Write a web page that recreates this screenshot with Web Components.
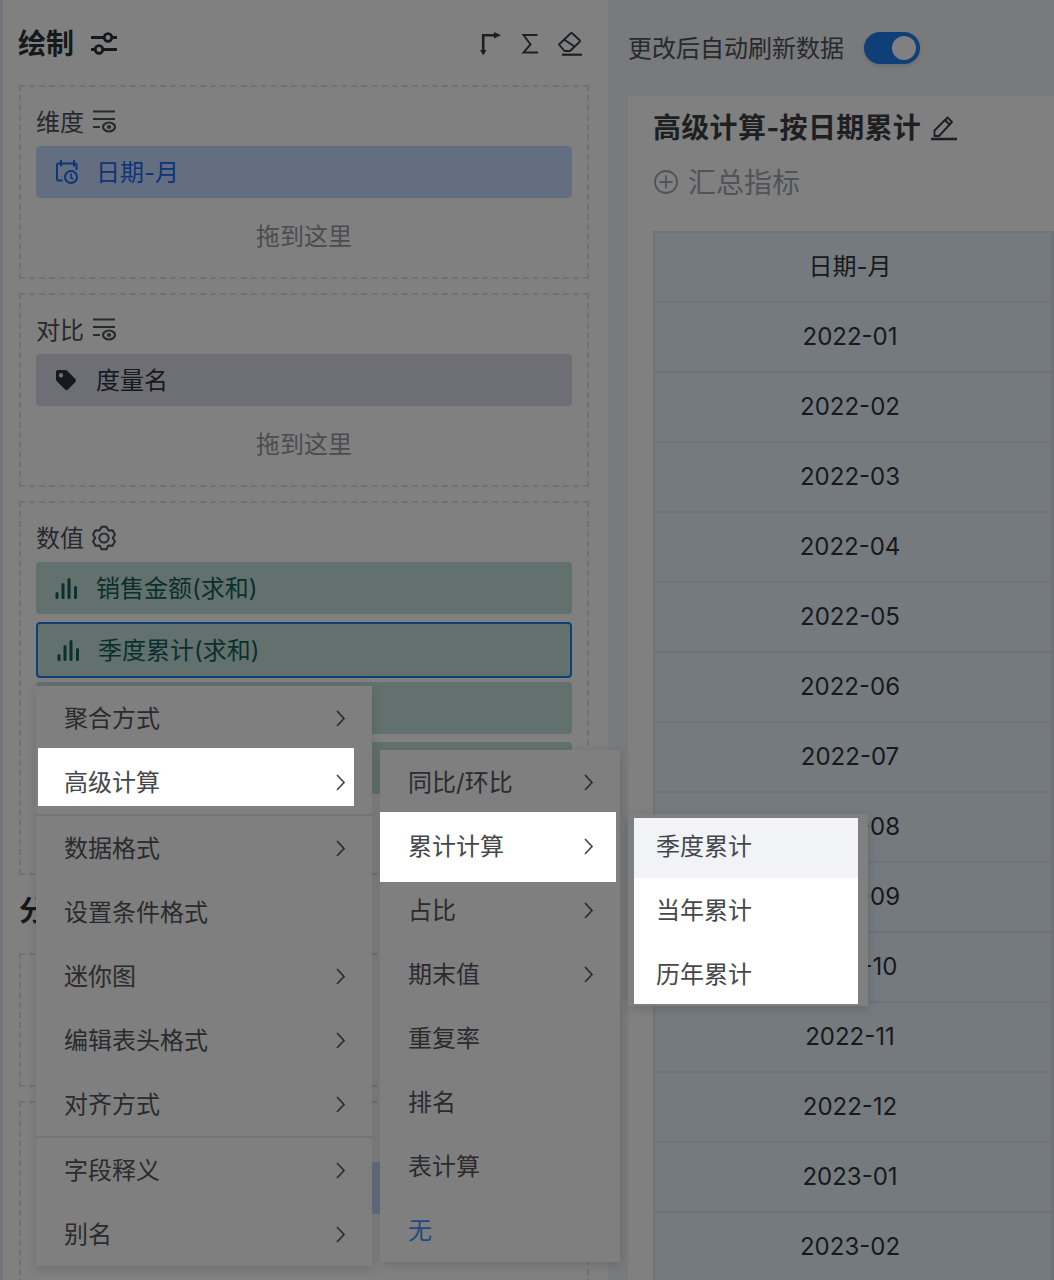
<!DOCTYPE html>
<html lang="zh">
<head>
<meta charset="utf-8">
<title>绘制</title>
<style>
  html, body { margin: 0; height: 1280px; overflow: hidden; background: #787a7c; }
  body { font-family: Inter, "Noto Sans CJK SC", sans-serif; line-height: 1.2; color: #26282b; }
</style>
</head>
<body>
<x-workspace>
  <x-draw-panel slot="left">
    <x-zone label="维度" icon="filter">
      <x-chip kind="date" icon="calendar">日期-月</x-chip>
    </x-zone>
    <x-zone label="对比" icon="filter">
      <x-chip kind="tag" icon="tag">度量名</x-chip>
    </x-zone>
    <x-zone label="数值" icon="gear">
      <x-chip kind="num" icon="bars">销售金额(求和)</x-chip>
      <x-chip kind="num" icon="bars" selected>季度累计(求和)</x-chip>
      <x-chip kind="num"></x-chip>
      <x-chip kind="num"></x-chip>
    </x-zone>
    <x-heading>分</x-heading>
    <x-zone short></x-zone>
    <x-zone>
      <x-chip kind="date"></x-chip>
    </x-zone>
  </x-draw-panel>
  <x-report slot="right"></x-report>
</x-workspace>

<x-menu style="left:36px;top:686px;width:336px">
  <x-menu-item arrow>聚合方式</x-menu-item>
  <x-menu-item arrow lit="a">高级计算</x-menu-item>
  <x-menu-sep></x-menu-sep>
  <x-menu-item arrow>数据格式</x-menu-item>
  <x-menu-item>设置条件格式</x-menu-item>
  <x-menu-item arrow>迷你图</x-menu-item>
  <x-menu-item arrow>编辑表头格式</x-menu-item>
  <x-menu-item arrow>对齐方式</x-menu-item>
  <x-menu-sep></x-menu-sep>
  <x-menu-item arrow>字段释义</x-menu-item>
  <x-menu-item arrow>别名</x-menu-item>
</x-menu>

<x-menu style="left:380px;top:750px;width:240px">
  <x-menu-item arrow>同比/环比</x-menu-item>
  <x-menu-item arrow lit="b">累计计算</x-menu-item>
  <x-menu-item arrow>占比</x-menu-item>
  <x-menu-item arrow>期末值</x-menu-item>
  <x-menu-item>重复率</x-menu-item>
  <x-menu-item>排名</x-menu-item>
  <x-menu-item>表计算</x-menu-item>
  <x-menu-item blue>无</x-menu-item>
</x-menu>

<x-menu style="left:628px;top:814px;width:240px">
  <x-menu-item lit="c">季度累计</x-menu-item>
  <x-menu-item lit="d">当年累计</x-menu-item>
  <x-menu-item lit="e">历年累计</x-menu-item>
</x-menu>

<script>
const ICONS = {
  sliders: '<g fill="none" stroke="currentColor" stroke-width="2.8"><path d="M0 5.500h13M21 5.500h5M0 17.500h4M12 17.500h14"/><circle cx="17" cy="5.500" r="3.800"/><circle cx="8" cy="17.500" r="3.800"/></g>',
  corner: '<path d="M3.200 20V3.200H15" fill="none" stroke="currentColor" stroke-width="2.600"/><path d="M0 18h6.500l-3.200 5.500zM14 0l7 3.200-7 3.300z" fill="currentColor"/>',
  sigma: '<path d="M15.500 3H1.500l7 9.500-7 8h14.500" fill="none" stroke="currentColor" stroke-width="1.900"/>',
  eraser: '<g fill="none" stroke="currentColor" stroke-width="1.900" stroke-linejoin="round"><path d="M1 12.500 12.500 1.500a1.500 1.500 0 0 1 2 0l7 6.500a1.500 1.500 0 0 1 0 2L12 19H6.500z"/><path d="m6 7.500 10.500 7"/><path d="M4 22.700h20" stroke-width="2.200"/></g>',
  filter: '<g fill="none" stroke="currentColor" stroke-width="2.200"><path d="M0 1.500h22M0 9h22M0 17h7"/><ellipse cx="16" cy="17" rx="6" ry="4.500"/></g><circle cx="16" cy="17" r="2.100" fill="currentColor"/>',
  calendar: '<g fill="none" stroke="currentColor" stroke-width="2"><path d="M7.500 20.500H3.500a1.500 1.500 0 0 1-1.500-1.500V5a1.500 1.500 0 0 1 1.500-1.500H20a1.500 1.500 0 0 1 1.500 1.500v5M6 0v6.500M19 0v6.500"/><circle cx="16" cy="17" r="6"/><path d="M16 13.500v4l2.200 1.500" stroke-width="1.600"/></g>',
  tag: '<path d="M1 3a2 2 0 0 1 2-2h7.500a2 2 0 0 1 1.400.6l8.500 8.500a2 2 0 0 1 0 2.800l-7.500 7.500a2 2 0 0 1-2.800 0L1.600 11.900A2 2 0 0 1 1 10.500zM6 4a2.200 2.200 0 1 0 0 4.400A2.200 2.200 0 0 0 6 4z" fill="currentColor" fill-rule="evenodd"/>',
  gear: '<g fill="none" stroke="currentColor" stroke-width="2" stroke-linejoin="round"><path d="M9.600 .8h4.800l2 3.600 4.150-.1 2.400 4.150L20.800 12l2.150 3.550-2.400 4.150-4.150-.1-2 3.650H9.600l-2-3.650-4.150.1-2.400-4.150L3.200 12 1.050 8.450l2.400-4.150 4.150.1z"/><circle cx="12" cy="12" r="4.600"/></g>',
  bars: '<path d="M2 19.500v-4M8 19.500v-13M14 19.500v-18M20.500 19.500v-10" fill="none" stroke="currentColor" stroke-width="3" stroke-linecap="round"/>',
  pencil: '<g fill="none" stroke="currentColor" stroke-width="1.900" stroke-linejoin="round"><path d="M3.500 20v-5.500L16.500 1.500l4.500 4.500L8 20z"/><path d="m14 4 4.500 4.500"/><path d="M0 23h26" stroke-width="2.600"/></g>',
  plus: '<g fill="none" stroke="currentColor" stroke-width="1.800"><circle cx="12" cy="12" r="11"/><path d="M12 5.500v13M5.500 12h13"/></g>',
  chevron: '<path d="m1 1 7 7.500L1 16" fill="none" stroke="currentColor" stroke-width="1.700"/>'
};

class XIcon extends HTMLElement {
  connectedCallback() {
    const w = this.getAttribute("w") || 24;
    const h = this.getAttribute("h") || 24;
    this.attachShadow({ mode: "open" }).innerHTML = `
      <style>:host { display: inline-flex; flex: none; } svg { display: block; overflow: visible; }</style>
      <svg width="${w}" height="${h}" viewBox="0 0 ${w} ${h}">${ICONS[this.getAttribute("name")]}</svg>`;
  }
}

class XWorkspace extends HTMLElement {
  constructor() {
    super();
    this.attachShadow({ mode: "open" }).innerHTML = `
      <style>
        :host { display: flex; height: 1280px; overflow: hidden; }
        .left { flex: none; width: 608px; }
        .right { flex: 1; min-width: 0; }
      </style>
      <div class="left"><slot name="left"></slot></div>
      <div class="right"><slot name="right"></slot></div>`;
  }
}

class XDrawPanel extends HTMLElement {
  constructor() {
    super();
    this.attachShadow({ mode: "open" }).innerHTML = `
      <style>
        :host { display: block; position: relative; box-sizing: border-box; height: 1280px; background: #808080;
          border-left: 3px solid #73757a; padding: 0 19px 0 16px; overflow: hidden; }
        .rail { position: absolute; left: -3px; top: 285px; bottom: 0; width: 2px; background: #5f6b7a; }
        header { display: flex; align-items: center; box-sizing: border-box; height: 85px; padding-top: 2px; }
        h2 { margin: 0 17px 0 -1px; padding-top: 2px; font-size: 28px; font-weight: 700; color: #16181a; }
        .tools { margin-left: auto; display: flex; align-items: center; gap: 20px; color: #1d1f22; padding-right: 7px; }
        .tools x-icon:first-child { margin-right: 2px; }
        header > x-icon { color: #16181a; }
      </style>
      <div class="rail"></div>
      <header>
        <h2>绘制</h2><x-icon name="sliders" w="26" h="24"></x-icon>
        <div class="tools">
          <x-icon name="corner" w="20" h="24"></x-icon>
          <x-icon name="sigma" w="16" h="24"></x-icon>
          <x-icon name="eraser" w="24" h="24"></x-icon>
        </div>
      </header>
      <slot></slot>`;
  }
}

class XHeading extends HTMLElement {
  constructor() {
    super();
    this.attachShadow({ mode: "open" }).innerHTML = `
      <style>:host { display: flex; align-items: center; height: 64px; padding-bottom: 18px;
        box-sizing: border-box; font-size: 28px; font-weight: 700; color: #16181a; }</style>
      <slot></slot>`;
  }
}

class XZone extends HTMLElement {
  connectedCallback() {
    const label = this.getAttribute("label") || "";
    const icon = this.getAttribute("icon");
    const short = this.hasAttribute("short");
    this.attachShadow({ mode: "open" }).innerHTML = `
      <style>
        :host { display: block; box-sizing: border-box; margin-bottom: 14px; border: 2px dashed #707173;
          padding: 17px 15px 3px; ${short ? "height: 134px;" : ""} }
        .head { display: flex; align-items: center; gap: 9px; height: 36px; margin-bottom: 6px; font-size: 24px; color: #27292c; }
        .head span { padding-top: 2px; }
        .head x-icon[name=gear] { margin-left: -1px; }
        .list { display: flex; flex-direction: column; gap: 8px; }
        .drop { display: flex; align-items: center; justify-content: center; height: 76px; padding-top: 2px; box-sizing: border-box; font-size: 24px; color: #4b4c4f; }
      </style>
      <div class="head"><span>${label}</span>${icon ? `<x-icon name="${icon}" w="${icon === "filter" ? 23 : 24}" h="24"></x-icon>` : ""}</div>
      <div class="list"><slot></slot></div>
      ${short ? "" : '<div class="drop">拖到这里</div>'}`;
  }
}

class XChip extends HTMLElement {
  connectedCallback() {
    const icon = this.getAttribute("icon");
    const sizes = { calendar: [23, 24], tag: [23, 22], bars: [23, 21] };
    const [w, h] = sizes[icon] || [24, 24];
    this.attachShadow({ mode: "open" }).innerHTML = `
      <style>
        :host { display: flex; align-items: center; gap: 18px; box-sizing: border-box; height: 52px; padding-left: 19px;
          border-radius: 4px; font-size: 24px; }
        :host([kind=date]) { background: #636e80; color: #0f3478; }
        :host([kind=tag]) { background: #6e6f74; color: #17191c; }
        :host([kind=num]) { background: #62716e; color: #0b2f2b; }
        :host([selected]) { height: 56px; margin-bottom: -4px; border: 2px solid #0f3f78; }
        span { padding-top: 2px; }
      </style>
      ${icon ? `<x-icon name="${icon}" w="${w}" h="${h}"></x-icon>` : ""}<span><slot></slot></span>`;
  }
}

class XDataTable extends HTMLElement {
  connectedCallback() {
    const months = ["2022-01","2022-02","2022-03","2022-04","2022-05","2022-06","2022-07","2022-08","2022-09","2022-10","2022-11","2022-12","2023-01","2023-02"];
    this.attachShadow({ mode: "open" }).innerHTML = `
      <style>
        :host { display: grid; grid-template-columns: 390px 1fr; grid-auto-rows: 70px; margin-left: 25px;
          border-top: 2px solid #6f7278; border-left: 2px solid #6f7278; background: #757a7e; font-size: 24px; color: #17191c; }
        div { display: flex; align-items: center; justify-content: center; box-sizing: border-box; border-bottom: 2px solid #6f7278; border-right: 3px solid #6f7278; }
        div:nth-child(even) { border-right: 0; }
        div:first-child { padding-top: 2px; }
      </style>
      <div>日期-月</div><div></div>
      ${months.map(m => `<div>${m}</div><div></div>`).join("")}`;
  }
}

class XReport extends HTMLElement {
  constructor() {
    super();
    this.attachShadow({ mode: "open" }).innerHTML = `
      <style>
        :host { display: block; height: 1280px; padding-left: 20px; background: #787a7c; }
        .bar { display: flex; align-items: center; gap: 20px; height: 96px; font-size: 24px; color: #27292c; }
        .bar span { padding-top: 2px; }
        .switch { width: 56px; height: 32px; border-radius: 16px; background: #0e3f78; display: flex; align-items: center;
          justify-content: flex-end; padding-right: 4px; box-sizing: border-box; box-shadow: 0 2px 4px rgba(0,0,0,.12); }
        .switch i { width: 24px; height: 24px; border-radius: 50%; background: #808080; }
        .card { background: #808080; height: 1184px; }
        .title { display: flex; align-items: center; gap: 10px; padding: 14px 0 0 25px; height: 36px; font-size: 28px; font-weight: 700; letter-spacing: .3px; color: #1d1f22; }
        .title span { padding-top: 2px; }
        .sum { display: flex; align-items: center; gap: 10px; height: 40px; padding-left: 26px; margin-top: 16px; margin-bottom: 29px; font-size: 28px; color: #505358; }
        .sum span { padding-top: 4px; }
      </style>
      <div class="bar"><span>更改后自动刷新数据</span><div class="switch"><i></i></div></div>
      <div class="card">
        <div class="title"><span>高级计算-按日期累计</span><x-icon name="pencil" w="26" h="24"></x-icon></div>
        <div class="sum"><x-icon name="plus" w="24" h="24"></x-icon><span>汇总指标</span></div>
        <x-data-table></x-data-table>
      </div>`;
  }
}

class XMenu extends HTMLElement {
  constructor() {
    super();
    this.attachShadow({ mode: "open" }).innerHTML = `
      <style>:host { display: block; position: absolute; background: #7f7f7f; box-shadow: 0 3px 10px rgba(0,0,0,.14); font-size: 24px; }</style>
      <slot></slot>`;
  }
}

class XMenuSep extends HTMLElement {
  constructor() {
    super();
    this.attachShadow({ mode: "open" }).innerHTML = `<style>:host { display: block; height: 2px; background: #727376; }</style>`;
  }
}

class XMenuItem extends HTMLElement {
  connectedCallback() {
    const arrow = this.hasAttribute("arrow");
    this.attachShadow({ mode: "open" }).innerHTML = `
      <style>
        :host { display: flex; align-items: center; justify-content: space-between; position: relative; height: 64px;
          padding: 0 27px 0 28px; color: #2a2b2d; }
        :host([blue]) { color: #1f4a80; }
        .hi { display: none; position: absolute; background: #fff; }
        :host([lit]) { color: #45474b; }
        :host([lit=a]) .hi { display: block; left: 2px; right: 18px; top: -2px; bottom: 8px; }
        :host([lit=b]) .hi { display: block; left: 0; right: 4px; top: -2px; bottom: -4px; }
        :host([lit=c]) .hi { display: block; left: 6px; right: 10px; top: 4px; bottom: 0; background: #f2f3f7; }
        :host([lit=d]) .hi { display: block; left: 6px; right: 10px; top: 0; bottom: 0; }
        :host([lit=e]) .hi { display: block; left: 6px; right: 10px; top: 0; bottom: 2px; }
        span, x-icon { position: relative; }
        span { padding-top: 2px; }
      </style>
      <div class="hi"></div>
      <span><slot></slot></span>
      ${arrow ? '<x-icon name="chevron" w="9" h="17"></x-icon>' : ""}`;
  }
}

customElements.define("x-icon", XIcon);
customElements.define("x-workspace", XWorkspace);
customElements.define("x-draw-panel", XDrawPanel);
customElements.define("x-heading", XHeading);
customElements.define("x-zone", XZone);
customElements.define("x-chip", XChip);
customElements.define("x-data-table", XDataTable);
customElements.define("x-report", XReport);
customElements.define("x-menu", XMenu);
customElements.define("x-menu-sep", XMenuSep);
customElements.define("x-menu-item", XMenuItem);
</script>
</body>
</html>
